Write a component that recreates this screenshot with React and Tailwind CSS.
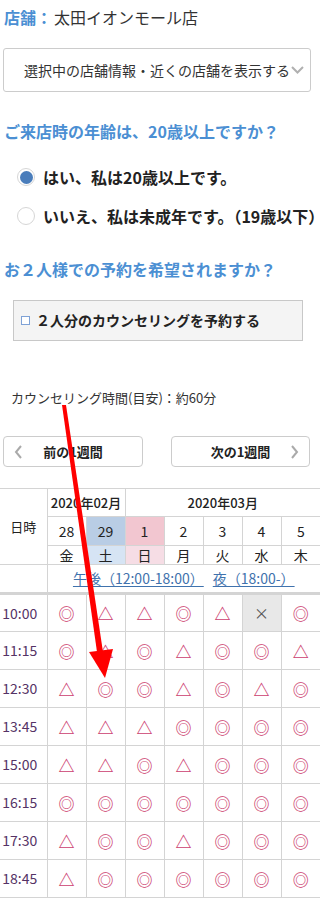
import React from 'react';

const days = [
  { d: '28', w: '金', dBg: '', wBg: '' },
  { d: '29', w: '土', dBg: 'bg-[#b9cde5]', wBg: 'bg-[#d6e4f4]' },
  { d: '1', w: '日', dBg: 'bg-[#f2c6d0]', wBg: 'bg-[#f6dde5]' },
  { d: '2', w: '月', dBg: '', wBg: '' },
  { d: '3', w: '火', dBg: '', wBg: '' },
  { d: '4', w: '水', dBg: '', wBg: '' },
  { d: '5', w: '木', dBg: '', wBg: '' },
];

const slots = [
  ['10:00', ['◎', '△', '△', '◎', '△', '×', '◎']],
  ['11:15', ['◎', '△', '◎', '△', '◎', '◎', '△']],
  ['12:30', ['△', '◎', '◎', '△', '◎', '△', '◎']],
  ['13:45', ['△', '△', '△', '◎', '◎', '◎', '◎']],
  ['15:00', ['△', '△', '◎', '△', '◎', '◎', '◎']],
  ['16:15', ['◎', '◎', '◎', '◎', '◎', '◎', '◎']],
  ['17:30', ['△', '◎', '◎', '△', '◎', '◎', '◎']],
  ['18:45', ['△', '◎', '◎', '◎', '◎', '◎', '◎']],
];

const Chevron = ({ dir }) => (
  <svg width="9" height="14" viewBox="0 0 9 14" className="shrink-0">
    <polyline
      points={dir === 'left' ? '7,1 2,7 7,13' : '2,1 7,7 2,13'}
      fill="none"
      stroke="#aaaaaa"
      strokeWidth="2"
    />
  </svg>
);

const Booking = () => {
  return (
    <div className="relative w-[320px] overflow-hidden bg-white text-[#333] font-['Noto_Sans_CJK_JP','Noto_Sans',sans-serif]">
      <div className="h-[34px] flex items-center pl-[4px] text-[16px]">
        <span className="font-bold text-[#4b8fd3]">店舗：</span>
        <span className="ml-[2px]">太田イオンモール店</span>
      </div>

      <div className="mt-[14px] ml-[3px] w-[308px] h-[44px] border border-[#cccccc] rounded-[3px] flex items-center pl-[20px] text-[14px] whitespace-nowrap">
        <span>選択中の店舗情報・近くの店舗を表示する</span>
        <svg width="13" height="8" viewBox="0 0 13 8" className="ml-[1px] shrink-0">
          <polyline points="1,1 6.5,6.5 12,1" fill="none" stroke="#b0b0b0" strokeWidth="2" />
        </svg>
      </div>

      <div className="mt-[28px] h-[22px] flex items-center pl-[4px] text-[16px] font-bold text-[#4b8fd3] whitespace-nowrap">
        ご来店時の年齢は、20歳以上ですか？
      </div>

      <div className="mt-[23px] h-[24px] flex items-center pl-[17px] whitespace-nowrap">
        <span className="w-[18px] h-[18px] rounded-full border border-[#d6d6d6] bg-white flex items-center justify-center shrink-0">
          <span className="w-[13px] h-[13px] rounded-full bg-[#4a7dbb]" />
        </span>
        <span className="ml-[8px] text-[16px] font-bold text-[#222]">はい、私は20歳以上です。</span>
      </div>

      <div className="mt-[15px] h-[24px] flex items-center pl-[17px] whitespace-nowrap">
        <span className="w-[18px] h-[18px] rounded-full border border-[#d6d6d6] bg-white shrink-0" />
        <span className="ml-[8px] text-[16px] font-bold text-[#222]">いいえ、私は未成年です。（19歳以下）</span>
      </div>

      <div className="mt-[30px] h-[22px] flex items-center pl-[4px] text-[16px] font-bold text-[#4b8fd3] whitespace-nowrap">
        お２人様での予約を希望されますか？
      </div>

      <div className="mt-[20px] ml-[13px] w-[290px] h-[41px] border border-[#c8c8c8] bg-[#f4f4f4] flex items-center pl-[7px] whitespace-nowrap">
        <span className="w-[9px] h-[9px] border border-[#7fa2d6] bg-white shrink-0" />
        <span className="ml-[6px] text-[14px] font-bold text-[#222]">２人分のカウンセリングを予約する</span>
      </div>

      <div className="mt-[48px] h-[18px] flex items-center pl-[11px] text-[13px] whitespace-nowrap">
        カウンセリング時間(目安)：約60分
      </div>

      <div className="mt-[29px] flex gap-[28px] pl-[3px]">
        <button className="w-[140px] h-[31px] border border-[#cccccc] rounded-[4px] bg-white flex items-center px-[10px]">
          <Chevron dir="left" />
          <span className="flex-1 text-center text-[13px] font-bold text-[#222] pr-[9px]">前の1週間</span>
        </button>
        <button className="w-[139px] h-[31px] border border-[#cccccc] rounded-[4px] bg-white flex items-center px-[10px]">
          <span className="flex-1 text-center text-[13px] font-bold text-[#222] pl-[9px]">次の1週間</span>
          <Chevron dir="right" />
        </button>
      </div>

      <table className="mt-[21px] w-[320px] table-fixed border-collapse text-center">
        <colgroup>
          <col className="w-[47px]" />
          {days.map((d) => (
            <col key={d.d} className="w-[39px]" />
          ))}
        </colgroup>
        <thead>
          <tr className="h-[28px]">
            <th rowSpan={3} className="border-y border-r border-[#d4d4d4] text-[13px] font-normal text-[#222]">
              日時
            </th>
            <th colSpan={2} className="border border-[#d4d4d4] text-[13px] font-medium text-[#222] whitespace-nowrap">
              2020年02月
            </th>
            <th colSpan={5} className="border-y border-l border-[#d4d4d4] text-[13px] font-medium text-[#222]">
              2020年03月
            </th>
          </tr>
          <tr className="h-[29px]">
            {days.map((d, i) => (
              <td
                key={d.d}
                className={`border-y border-[#d4d4d4] ${i < 6 ? 'border-r' : ''} ${d.dBg} text-[14px] text-[#222]`}
              >
                {d.d}
              </td>
            ))}
          </tr>
          <tr className="h-[19px]">
            {days.map((d, i) => (
              <td
                key={d.w}
                className={`border-y border-[#d4d4d4] ${i < 6 ? 'border-r' : ''} ${d.wBg} text-[14px] leading-[17px] text-[#222]`}
              >
                {d.w}
              </td>
            ))}
          </tr>
          <tr className="h-[29px]">
            <td className="border-t border-b-[3px] border-r border-[#d4d4d4]" />
            <td colSpan={7} className="border-t border-b-[3px] border-[#d4d4d4] text-[14px] whitespace-nowrap">
              <span className="text-[#3f72ad] underline underline-offset-2">午後（12:00-18:00）</span>
              <span className="ml-[9px] text-[#3f72ad] underline underline-offset-2">夜（18:00-）</span>
            </td>
          </tr>
        </thead>
        <tbody>
          {slots.map(([time, marks]) => (
            <tr key={time} className="h-[38px]">
              <td className="border-y border-r border-[#d4d4d4] text-[14px] text-[#553366] pr-[7px]">{time}</td>
              {marks.map((m, i) => (
                <td
                  key={i}
                  className={`border-y border-[#d4d4d4] ${i < 6 ? 'border-r' : ''} ${
                    m === '×' ? 'bg-[#e8e8e8] text-[#555] text-[15px]' : 'text-[#cc3d6e] text-[16px] font-bold'
                  }`}
                >
                  {m}
                </td>
              ))}
            </tr>
          ))}
        </tbody>
      </table>

      <svg
        className="absolute left-0 top-0 pointer-events-none"
        width="320"
        height="902"
        viewBox="0 0 320 902"
      >
        <polygon points="62,405 66,405 103,652 97,652" fill="#ff0000" />
        <polygon points="89,652 113,649 105,678" fill="#ff0000" />
      </svg>
    </div>
  );
};

export default function App() {
  return <Booking />;
}
